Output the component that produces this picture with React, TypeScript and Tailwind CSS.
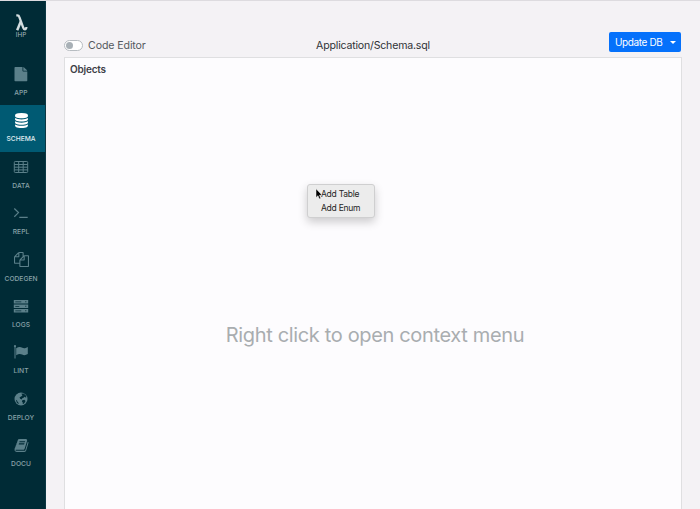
import type { ReactNode } from "react";

const DATABASE =
  "M896 768q237 0 443-43t325-127v170q0 69-103 128t-280 93.5-385 34.5-385-34.5-280-93.5-103-128v-170q119 84 325 127t443 43zm0 768q237 0 443-43t325-127v170q0 69-103 128t-280 93.5-385 34.5-385-34.5-280-93.5-103-128v-170q119 84 325 127t443 43zm0-384q237 0 443-43t325-127v170q0 69-103 128t-280 93.5-385 34.5-385-34.5-280-93.5-103-128v-170q119 84 325 127t443 43zm0-1152q208 0 385 34.5t280 93.5 103 128v128q0 69-103 128t-280 93.5-385 34.5-385-34.5-280-93.5-103-128v-128q0-69 103-128t280-93.5 385-34.5z";
const COPY =
  "M1696 384q40 0 68 28t28 68v1216q0 40-28 68t-68 28h-960q-40 0-68-28t-28-68v-288h-544q-40 0-68-28t-28-68v-672q0-40 20-88t48-76l408-408q28-28 76-48t88-20h416q40 0 68 28t28 68v328q68-40 128-40h416zm-544 213l-299 299h299v-299zm-640-384l-299 299h299v-299zm196 647l316-316v-416h-384v416q0 40-28 68t-68 28h-416v640h512v-256q0-40 20-88t48-76zm956 804v-1152h-384v416q0 40-28 68t-68 28h-416v640h896z";
const BOOK =
  "M1703 478q40 57 18 129l-275 906q-19 64-76.5 107.5t-122.5 43.5h-923q-77 0-148.5-53.5t-99.5-131.5q-24-67-2-127 0-4 3-27t4-37q1-8-3-21.5t-3-19.5q2-11 8-21t16.5-23.5 16.5-23.5q23-38 45-91.5t30-91.5q3-10 .5-30t-.5-28q3-11 17-28t17-23q21-36 42-92t25-90q1-9-2.500-32t.5-28q4-13 22-30.5t22-22.5q19-26 42.5-84.5t27.5-96.5q1-8-3-25.5t-2-26.5q2-8 9-18t18-23 17-21q8-12 16.5-30.5t15-35 16-36 19.5-32 26.5-23.5 36-11.5 47.5 5.5l-1 3q38-9 51-9h761q74 0 114 56t18 130l-274 906q-36 119-71.5 153.5t-128.5 34.5h-869q-27 0-38 15-11 16-1 43 24 70 144 70h923q29 0 56-15.5t35-41.5l300-987q7-22 5-57 38 15 59 43zm-1064 2q-4 13 2 22.5t20 9.5h608q13 0 25.5-9.5t16.5-22.5l21-64q4-13-2-22.5t-20-9.5h-608q-13 0-25.5 9.5t-16.5 22.5zm-83 256q-4 13 2 22.5t20 9.5h608q13 0 25.5-9.5t16.5-22.5l21-64q4-13-2-22.5t-20-9.5h-608q-13 0-25.5 9.5t-16.5 22.5z";

const Glyph = ({ d }: { d: string }) => (
  <svg viewBox="0 0 1792 1792" className="size-[15px]" fill="currentColor">
    <path d={d} />
  </svg>
);

const Icon = ({ children }: { children: ReactNode }) => (
  <svg viewBox="0 0 16 16" className="size-4" fill="none" stroke="currentColor">
    {children}
  </svg>
);

const items: { label: string; icon: ReactNode }[] = [
  {
    label: "APP",
    icon: (
      <Icon>
        <path stroke="none" fill="currentColor" d="M2.200 1H9.500v3.700q0 .8.8.8h4v9q0 .7-.7.7H2.200q-.7 0-.7-.7V1.700Q1.500 1 2.200 1zM10.300 1q.4 0 .8.400l2.700 2.500q.4.400.400.900h-3.900z" />
      </Icon>
    ),
  },
  { label: "SCHEMA", icon: <Glyph d={DATABASE} /> },
  {
    label: "DATA",
    icon: (
      <Icon>
        <path d="M2.200 2.500h11.600q.9 0 .9.900v9.200q0 .9-.9.900H2.200q-.9 0-.9-.900V3.400q0-.9.900-.9zM1.300 5.500h13.400M1.300 8.200h13.400M1.300 10.900h13.400M5.700 3v10.500M10.200 3v10.500" />
      </Icon>
    ),
  },
  {
    label: "REPL",
    icon: (
      <Icon>
        <path strokeWidth="1.200" d="M1.300 3.500 5.500 7.600 1.300 11.700M6.300 12.300h8.400" />
      </Icon>
    ),
  },
  { label: "CODEGEN", icon: <Glyph d={COPY} /> },
  {
    label: "LOGS",
    icon: (
      <Icon>
        <path stroke="none" fill="currentColor" fillRule="evenodd" d="M.800 2h14.400v3.500H.8zM.8 6.500h14.400V10H.8zM.8 11h14.400v3.500H.8zM2.300 3.400v.8h6v-.8zM12.300 3.200v1h1v-1zM2.300 7.900v.8h4v-.8zM12.300 7.700v1h1v-1zM2.300 12.400v.8h6v-.8zM12.300 12.200v1h1v-1z" />
      </Icon>
    ),
  },
  {
    label: "LINT",
    icon: (
      <Icon>
        <path d="M2 2.500v12" />
        <circle cx="2" cy="2.200" r="1.100" fill="currentColor" stroke="none" />
        <path stroke="none" fill="currentColor" d="M3.200 4.200C5.500 2.700 7.300 2.600 9.300 3.700c1.700.9 3.300.3 5.500-.8v7.200c-2.100 1.200-3.800 1.500-5.700.5-2-1-3.800-.6-5.900.6z" />
      </Icon>
    ),
  },
  {
    label: "DEPLOY",
    icon: (
      <Icon>
        <circle cx="8" cy="8" r="6.500" fill="currentColor" stroke="none" />
        <path stroke="none" fill="#002b36" d="M8.200 2.700 10.400 2.600 12.600 4 13.500 6.200 12.600 6.500 11.500 5.800 10.600 6.800 9.300 7.200 8.700 8.600 7.200 7.700 6.500 6.600 8 5.600 9.300 4.700 9.100 3.700zM9.300 9.300 11.400 8.800 12.500 9.900 11.800 11.400 10.500 13 9.600 12.600 9.700 11.200 8.900 10.500zM2.800 8.800 4 9.400 4.700 10.900 5.700 12 5.500 12.900 3.900 11.700z" />
      </Icon>
    ),
  },
  { label: "DOCU", icon: <Glyph d={BOOK} /> },
];

function Sidebar() {
  return (
    <nav className="flex h-full w-[46px] shrink-0 flex-col border-r border-[#0b3843] bg-[#002b36]">
      <div className="flex h-[58px] flex-col items-center pr-[3px] pt-3 text-[#d3dde0]">
        <svg viewBox="0 0 13 18" className="h-[18px] w-[13px]" fill="none" stroke="currentColor">
          <path strokeWidth="2.300" d="M1.300 2.300h1q1.500 0 2 1.500l4 11q.6 1.500 1.600 1.500 1.300 0 1.500-2.300" />
          <path strokeWidth="2.500" d="M6 8 2.200 17.200" />
        </svg>
        <span className="text-[6.300px] leading-[8px] text-[#a9babf]">IHP</span>
      </div>
      {items.map(({ label, icon }) => (
        <div
          key={label}
          className={
            "flex h-[46.400px] shrink-0 flex-col items-center pr-[3px] pt-[7px] " +
            (label === "SCHEMA" ? "bg-[#005a73] text-white" : "text-[#5b808a]")
          }
        >
          <span className="flex h-4 items-center">{icon}</span>
          <span
            className={
              "mt-[7px] text-[6.700px] font-medium leading-[9px] " +
              (label === "SCHEMA" ? "text-[#e0eef2]" : "text-[#8aa3a9]")
            }
          >
            {label}
          </span>
        </div>
      ))}
    </nav>
  );
}

export default function App() {
  return (
    <div className="flex h-[509px] w-[700px] overflow-hidden border-t border-[#dddbdf] bg-[#f4f2f5] font-[Inter,'Liberation_Sans',sans-serif]">
      <Sidebar />
      <main className="flex min-w-0 flex-1 flex-col pl-[18px] pr-[18px] pt-[30px]">
        <header className="grid h-[26px] shrink-0 grid-cols-3">
          <label className="flex items-center pt-[3px] text-[10.600px] tracking-[-0.1px] text-[#555a60]">
            <span className="mb-px mr-[5px] flex h-[11px] w-[19px] items-center rounded-full border border-[#b7bcc1] bg-white px-px">
              <span className="size-[7px] rounded-full bg-[#a8b0b6]" />
            </span>
            Code Editor
          </label>
          <div className="flex items-center justify-center pt-[3px] text-[10.600px] tracking-[-0.2px] text-[#303237]">
            Application/Schema.sql
          </div>
          <div className="flex items-start justify-end pt-px">
            <button className="mr-px flex h-5 w-[72px] items-center justify-between whitespace-nowrap rounded-[2px] bg-[#0571fb] pl-[6px] pr-[5px] text-[10px] tracking-[-0.38px] text-white">
              Update DB
              <span className="size-0 shrink-0 border-x-[3px] border-t-[3px] border-x-transparent border-t-white" />
            </button>
          </div>
        </header>
        <section className="relative flex-1 border border-b-0 border-[#dfdfe1] bg-[#fdfcfe]">
          <h2 className="pl-[5px] pt-1 text-[10px] font-semibold leading-[14px] tracking-[-0.2px] text-[#3d4147]">
            Objects
          </h2>
          <p className="mt-[245px] pl-1 text-center text-[20px] leading-[28px] tracking-[-0.350px] text-[#a9adb0]">
            Right click to open context menu
          </p>
          <div className="absolute left-[242px] top-[126px] h-[34px] w-[68px] rounded-[3px] border border-[#cfcfd0] bg-[#ececec] pl-[13px] pt-[2px] text-[8.500px] leading-[14px] tracking-[-0.250px] text-[#242424] shadow-[0_4px_10px_rgba(0,0,0,0.2)]">
            <div>Add Table</div>
            <div>Add Enum</div>
            <svg viewBox="0 0 8 12" className="absolute left-[7px] top-[3px] h-3 w-2">
              <path d="M1 .8v8.800l2-1.900 1.300 3.200 1.500-.6-1.300-3.100h2.700z" fill="#000" stroke="#fff" strokeWidth=".5" />
            </svg>
          </div>
        </section>
      </main>
    </div>
  );
}
